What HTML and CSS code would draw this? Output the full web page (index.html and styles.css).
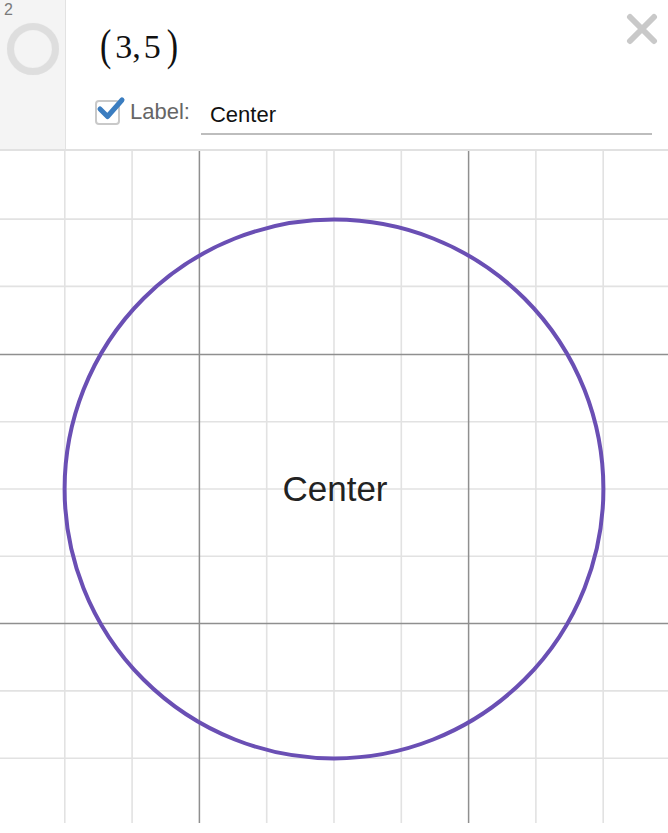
FILE: index.html
```html
<!DOCTYPE html>
<html>
<head>
<meta charset="utf-8">
<link rel="stylesheet" href="styles.css">
</head>
<body>
<div class="app">
  <div class="expression">
    <div class="gutter">
      <div class="index">2</div>
      <div class="icon"></div>
    </div>
    <div class="main">
      <div class="math"><span class="paren lp">(</span><span>3</span><span class="comma">,</span><span>5</span><span class="paren rp">)</span></div>
      <div class="label-row">
        <span class="checkbox">
          <svg class="check" width="30" height="26" viewBox="0 0 30 26"><path d="M4 13 L11.5 20.5 L26 4" fill="none" stroke="#3b7dc0" stroke-width="5" stroke-linecap="round" stroke-linejoin="round"/></svg>
        </span>
        <span class="label-text">Label:</span>
        <div class="field">Center</div>
      </div>
    </div>
    <div class="close">
      <svg width="32" height="32" viewBox="0 0 32 32"><path d="M4 4 L28 28 M28 4 L4 28" stroke="#c9c9c9" stroke-width="6" stroke-linecap="round"/></svg>
    </div>
  </div>
  <div class="graph">
    <svg width="668" height="672" viewBox="0 0 668 672">
      <g stroke="#e2e2e2" stroke-width="1.6">
        <line x1="64.8" y1="0" x2="64.8" y2="672"/>
        <line x1="132.1" y1="0" x2="132.1" y2="672"/>
        <line x1="266.7" y1="0" x2="266.7" y2="672"/>
        <line x1="334" y1="0" x2="334" y2="672"/>
        <line x1="401.3" y1="0" x2="401.3" y2="672"/>
        <line x1="535.9" y1="0" x2="535.9" y2="672"/>
        <line x1="603.2" y1="0" x2="603.2" y2="672"/>
        <line x1="0" y1="68.1" x2="668" y2="68.1"/>
        <line x1="0" y1="135.4" x2="668" y2="135.4"/>
        <line x1="0" y1="270.7" x2="668" y2="270.7"/>
        <line x1="0" y1="338" x2="668" y2="338"/>
        <line x1="0" y1="405.3" x2="668" y2="405.3"/>
        <line x1="0" y1="539.9" x2="668" y2="539.9"/>
        <line x1="0" y1="607.2" x2="668" y2="607.2"/>
      </g>
      <g stroke="#8f8f8f" stroke-width="1.5">
        <line x1="199.4" y1="0" x2="199.4" y2="672"/>
        <line x1="468.6" y1="0" x2="468.6" y2="672"/>
        <line x1="0" y1="203.4" x2="668" y2="203.4"/>
        <line x1="0" y1="472.6" x2="668" y2="472.6"/>
      </g>
      <circle cx="334" cy="338" r="269.4" fill="none" stroke="#6a4fb4" stroke-width="4"/>
      <text class="plot-label" x="335" y="350" text-anchor="middle">Center</text>
    </svg>
  </div>
</div>
</body>
</html>
```
FILE: styles.css
```css
html, body {
  margin: 0;
  padding: 0;
  background: #ffffff;
}
body {
  width: 668px;
  height: 833px;
  overflow: hidden;
  font-family: "Liberation Sans", Arial, sans-serif;
}
.app {
  display: flex;
  flex-direction: column;
  width: 668px;
  height: 833px;
}
.expression {
  display: flex;
  height: 149px;
  border-bottom: 2px solid #e1e1e1;
  position: relative;
  flex: none;
}
.gutter {
  width: 65px;
  background: #f4f4f4;
  border-right: 1px solid #e2e2e2;
  display: flex;
  flex-direction: column;
  flex: none;
}
.index {
  font-size: 16px;
  line-height: 18px;
  color: #7a7a7a;
  padding: 1px 0 0 4px;
}
.icon {
  width: 38px;
  height: 38px;
  border: 7px solid #dedede;
  border-radius: 50%;
  margin: 4px 0 0 7px;
  box-shadow: inset 0 0 1px rgba(0,0,0,0.08), 0 0 1px rgba(0,0,0,0.08);
}
.main {
  flex: 1;
  display: flex;
  flex-direction: column;
  padding-left: 29px;
}
.math {
  font-family: "Liberation Serif", "Times New Roman", serif;
  font-size: 34px;
  line-height: 40px;
  color: #111;
  margin: 27px 0 0 5px;
  height: 40px;
}
.paren {
  display: inline-block;
  transform: scaleY(1.28);
  transform-origin: 50% 62%;
}
.lp { margin-right: 4px; }
.comma { margin-right: 3px; }
.rp { margin-left: 6px; }
.label-row {
  display: flex;
  align-items: center;
  margin-top: 30px;
  height: 30px;
}
.checkbox {
  width: 25px;
  height: 25px;
  border: 2px solid #c9c9c9;
  border-radius: 4px;
  box-sizing: border-box;
  position: relative;
  flex: none;
  background: #fff;
}
.check {
  position: absolute;
  left: -1px;
  top: -6px;
}
.label-text {
  font-size: 22px;
  color: #666;
  margin-left: 10px;
}
.field {
  margin-left: 11px;
  width: 451px;
  box-sizing: border-box;
  font-size: 22px;
  color: #111;
  padding: 3px 0 5px 9px;
  border-bottom: 2px solid #bdbdbd;
  margin-top: 10px;
}
.close {
  position: absolute;
  right: 10px;
  top: 13px;
  width: 32px;
  height: 32px;
}
.graph {
  height: 672px;
  flex: none;
}
.graph svg {
  display: block;
}
.plot-label {
  font-family: "Liberation Sans", Arial, sans-serif;
  font-size: 35px;
  fill: #222;
}
```
